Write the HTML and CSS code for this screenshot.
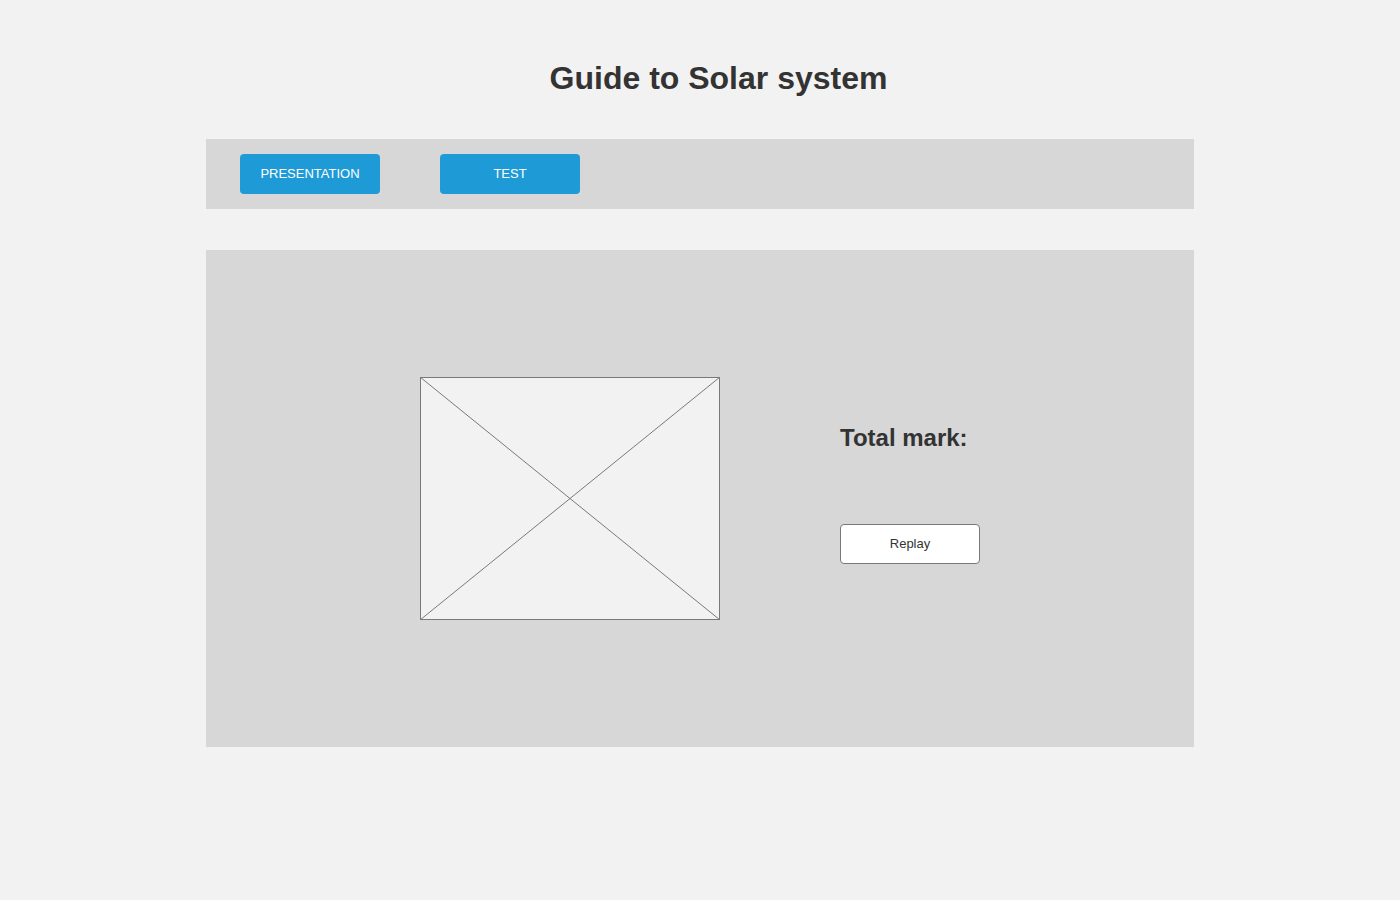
FILE: index.html
```html
<!DOCTYPE html>
<html lang="en">
<head>
<meta charset="utf-8">
<title>Guide to Solar system</title>
<link rel="stylesheet" href="styles.css">
</head>
<body>
<div class="page">
  <h1 class="title">Guide to Solar system</h1>
  <nav class="tabs">
    <button class="tab">PRESENTATION</button>
    <button class="tab">TEST</button>
  </nav>
  <main class="panel">
    <div class="placeholder">
      <svg class="placeholder-x" viewBox="0 0 300 243" preserveAspectRatio="none" width="300" height="243">
        <line x1="0" y1="0" x2="300" y2="243"/>
        <line x1="300" y1="0" x2="0" y2="243"/>
      </svg>
    </div>
    <div class="result">
      <h2 class="mark">Total mark:</h2>
      <button class="replay">Replay</button>
    </div>
  </main>
</div>
</body>
</html>
```
FILE: styles.css
```css
html, body {
  margin: 0;
  padding: 0;
  background: #f2f2f2;
  font-family: "Liberation Sans", Arial, sans-serif;
  color: #333333;
}

.page {
  width: 988px;
  margin: 0 auto;
}

.title {
  margin: 58px 0 0;
  padding-left: 37px;
  font-size: 32px;
  line-height: 40px;
  height: 41px;
  font-weight: bold;
  text-align: center;
  color: #333333;
}

.tabs {
  margin-top: 40px;
  height: 70px;
  box-sizing: border-box;
  padding: 15px 34px;
  background: #d7d7d7;
  display: flex;
  gap: 60px;
}

.tab {
  width: 140px;
  height: 40px;
  border: none;
  border-radius: 4px;
  background: #1e9ad6;
  color: #ffffff;
  font-family: "Liberation Sans", Arial, sans-serif;
  font-size: 13px;
  padding: 0 0 2px;
}

.panel {
  margin-top: 41px;
  height: 497px;
  box-sizing: border-box;
  background: #d7d7d7;
  padding: 127px 0 0 214px;
  display: flex;
  align-items: flex-start;
}

.placeholder {
  width: 300px;
  height: 243px;
  box-sizing: border-box;
  border: 1px solid #797979;
  background: #f2f2f2;
  position: relative;
  overflow: hidden;
}

.placeholder-x {
  position: absolute;
  left: -1px;
  top: -1px;
  display: block;
}

.placeholder-x line {
  stroke: #797979;
  stroke-width: 1;
  vector-effect: non-scaling-stroke;
}

.result {
  margin-left: 120px;
  padding-top: 47px;
  display: flex;
  flex-direction: column;
  align-items: flex-start;
}

.mark {
  margin: 0;
  font-size: 24px;
  line-height: 28px;
  font-weight: bold;
  color: #333333;
}

.replay {
  margin-top: 72px;
  width: 140px;
  height: 40px;
  box-sizing: border-box;
  border: 1px solid #797979;
  border-radius: 4px;
  background: #ffffff;
  color: #333333;
  font-family: "Liberation Sans", Arial, sans-serif;
  font-size: 13px;
  padding: 0 0 1px;
}
```
